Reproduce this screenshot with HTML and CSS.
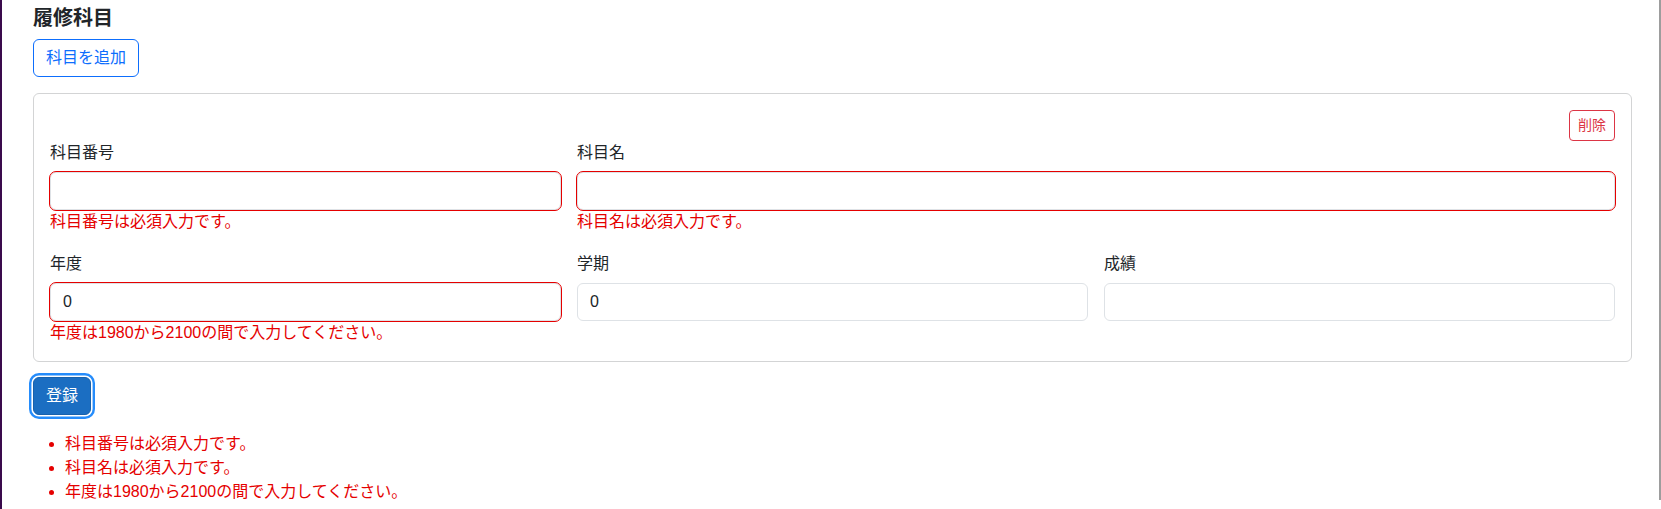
FILE: index.html
```html
<!DOCTYPE html>
<html lang="ja">
<head>
<meta charset="utf-8">
<title>履修科目</title>
<link rel="stylesheet" href="styles.css">
</head>
<body>
<div class="page">
  <div class="sidebar-edge"></div>
  <main class="main">
    <h5 class="title">履修科目</h5>
    <button type="button" class="btn btn-outline-primary">科目を追加</button>
    <div class="card">
      <div class="card-actions">
        <button type="button" class="btn btn-sm btn-outline-danger">削除</button>
      </div>
      <div class="fields">
        <div class="field">
          <label class="form-label">科目番号</label>
          <input class="form-control invalid" type="text" value="">
          <div class="validation-message">科目番号は必須入力です。</div>
        </div>
        <div class="field span-2">
          <label class="form-label">科目名</label>
          <input class="form-control invalid" type="text" value="">
          <div class="validation-message">科目名は必須入力です。</div>
        </div>
        <div class="field">
          <label class="form-label">年度</label>
          <input class="form-control invalid" type="text" value="0">
          <div class="validation-message">年度は1980から2100の間で入力してください。</div>
        </div>
        <div class="field">
          <label class="form-label">学期</label>
          <input class="form-control" type="text" value="0">
        </div>
        <div class="field">
          <label class="form-label">成績</label>
          <input class="form-control" type="text" value="">
        </div>
      </div>
    </div>
    <button type="submit" class="btn btn-primary focused">登録</button>
    <ul class="validation-errors">
      <li class="validation-message">科目番号は必須入力です。</li>
      <li class="validation-message">科目名は必須入力です。</li>
      <li class="validation-message">年度は1980から2100の間で入力してください。</li>
    </ul>
  </main>
  <div class="scroll-rail"><div class="scroll-thumb"></div></div>
</div>
</body>
</html>
```
FILE: styles.css
```css
* { box-sizing: border-box; }

html, body {
  margin: 0;
  height: 100%;
  overflow: hidden;
  background: #fff;
}

body {
  font-family: "Liberation Sans", "Noto Sans CJK JP", sans-serif;
  font-size: 16px;
  line-height: 24px;
  color: #212529;
}

.page {
  display: flex;
  height: 509px;
}

.sidebar-edge {
  width: 2px;
  flex: none;
  background: #3a0a4c;
}

.main {
  flex: 1;
  padding: 6px 27px 0 31px;
  display: flex;
  flex-direction: column;
  align-items: flex-start;
}

.scroll-rail {
  width: 2px;
  flex: none;
}

.scroll-thumb {
  height: 500px;
  background: #9d9d9d;
}

.title {
  margin: 0 0 9px;
  font-size: 20px;
  line-height: 24px;
  font-weight: 700;
  color: #212529;
}

.btn {
  font-family: inherit;
  font-size: 16px;
  line-height: 24px;
  padding: 6px 12px;
  border: 1px solid transparent;
  border-radius: 6px;
  background: #fff;
  cursor: pointer;
}

.btn-outline-primary {
  color: #0d6efd;
  border-color: #0d6efd;
}

.btn-sm {
  font-size: 14px;
  line-height: 21px;
  padding: 4px 8px;
  border-radius: 4px;
}

.btn-outline-danger {
  color: #dc3545;
  border-color: #dc3545;
}

.btn-primary {
  color: #fff;
  background: #1b6ec2;
  border-color: #1861ac;
}

.btn-primary.focused {
  box-shadow: 0 0 0 1.6px #fff, 0 0 0 4px #258cfb;
}

.card {
  align-self: stretch;
  margin-top: 16px;
  margin-bottom: 15px;
  border: 1px solid #d3d4d5;
  border-radius: 6px;
  padding: 16px;
}

.card-actions {
  display: flex;
  justify-content: flex-end;
}

.fields {
  display: grid;
  grid-template-columns: repeat(3, 1fr);
  column-gap: 16px;
  row-gap: 18px;
}

.span-2 { grid-column: span 2; }

.field {
  display: flex;
  flex-direction: column;
}

.form-label {
  display: block;
  margin-bottom: 7px;
  line-height: 24px;
  color: #212529;
}

.form-control {
  display: block;
  width: 100%;
  height: 38px;
  padding: 6px 12px;
  font-family: inherit;
  font-size: 16px;
  line-height: 24px;
  color: #212529;
  background: #fff;
  border: 1px solid #dee2e6;
  border-radius: 6px;
}

.form-control.invalid {
  outline: 1px solid #e50000;
}

.validation-message {
  color: #e50000;
}

.validation-errors {
  margin: 17px 0 0;
  padding-left: 32px;
}
```
